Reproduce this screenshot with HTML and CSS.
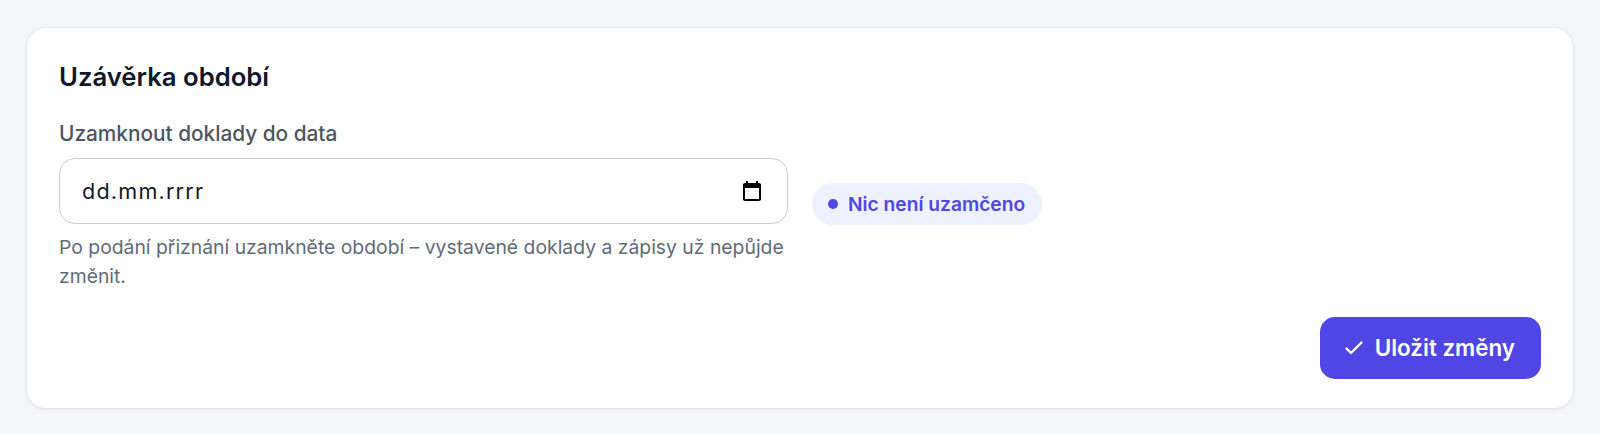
FILE: index.html
```html
<!DOCTYPE html>
<html lang="cs">
<head>
  <meta charset="UTF-8" />
  <meta name="viewport" content="width=device-width, initial-scale=1.0"/>
  <title>Uzávěrka období</title>
  <link rel="stylesheet" href="styles.css">
</head>
<body>

  <div class="card">
    <h2>Uzávěrka období</h2>

    <div class="lock-row">
      <div class="field">
        <label class="label">Uzamknout doklady do data</label>
        <div class="date-input">
          <span class="date-value">dd.mm.rrrr</span>
          <svg class="date-icon" viewBox="0 0 24 24" width="24" height="24" aria-hidden="true">
            <path fill="currentColor" d="M19 4h-1V2h-2v2H8V2H6v2H5c-1.1 0-2 .9-2 2v14c0 1.1.9 2 2 2h14c1.1 0 2-.9 2-2V6c0-1.1-.9-2-2-2zm0 16H5V9h14v11z"/>
          </svg>
        </div>
        <p class="hint">Po podání přiznání uzamkněte období – vystavené doklady a zápisy už nepůjde změnit.</p>
      </div>
      <div class="badge"><span class="dot"></span>Nic není uzamčeno</div>
    </div>

    <div class="actions">
      <button class="btn-save">
        <svg viewBox="0 0 24 24" width="24" height="24" aria-hidden="true">
          <path fill="none" stroke="currentColor" stroke-width="2.4" stroke-linecap="round" stroke-linejoin="round" d="M4.5 12.5l4.5 4.5 10.5-10.5"/>
        </svg>
        Uložit změny
      </button>
    </div>
  </div>

</body>
</html>
```

FILE: styles.css
```css
* {
  box-sizing: border-box;
}
body {
  font-family: Inter, sans-serif;
  background: #f4f6f8;
  margin: 0;
  padding: 27px 26px;
}
.card {
  background: #fff;
  border: 1px solid #e5e7eb;
  border-radius: 20px;
  box-shadow: 0 1px 3px rgba(17, 24, 39, 0.06);
  padding: 32px 32px 29px;
}
h2 {
  margin: 0 0 24px;
  font-size: 25.7px;
  font-weight: 600;
  line-height: 34px;
  color: #0f172a;
}
.lock-row {
  display: flex;
  align-items: center;
  gap: 24px;
}
.field {
  width: 729px;
}
.label {
  display: block;
  font-size: 20.8px;
  font-weight: 500;
  line-height: 31px;
  color: #4b5563;
  margin-bottom: 9px;
}
.date-input {
  display: flex;
  align-items: center;
  justify-content: space-between;
  height: 66px;
  padding: 0 23px 0 22px;
  border: 1.5px solid #c9cdd3;
  border-radius: 16px;
}
.date-value {
  font-size: 21.6px;
  letter-spacing: 1.2px;
  color: #111827;
}
.date-icon {
  color: #000;
}
.hint {
  margin: 9px 0 0;
  font-size: 19.35px;
  line-height: 28.8px;
  color: #616b7a;
}
.badge {
  display: inline-flex;
  align-items: center;
  gap: 10px;
  height: 42px;
  padding: 0 17px 0 16px;
  border-radius: 21px;
  background: #eef2ff;
  color: #4f46e5;
  font-size: 19.2px;
  font-weight: 600;
}
.dot {
  width: 10px;
  height: 10px;
  border-radius: 50%;
  background: #4f46e5;
}
.actions {
  display: flex;
  justify-content: flex-end;
  margin-top: 26px;
}
.btn-save {
  display: flex;
  align-items: center;
  gap: 9px;
  height: 62px;
  padding: 0 26px 0 22px;
  border: none;
  border-radius: 15px;
  background: #4f46e5;
  color: #fff;
  font-family: inherit;
  font-size: 22.4px;
  font-weight: 600;
}
```
